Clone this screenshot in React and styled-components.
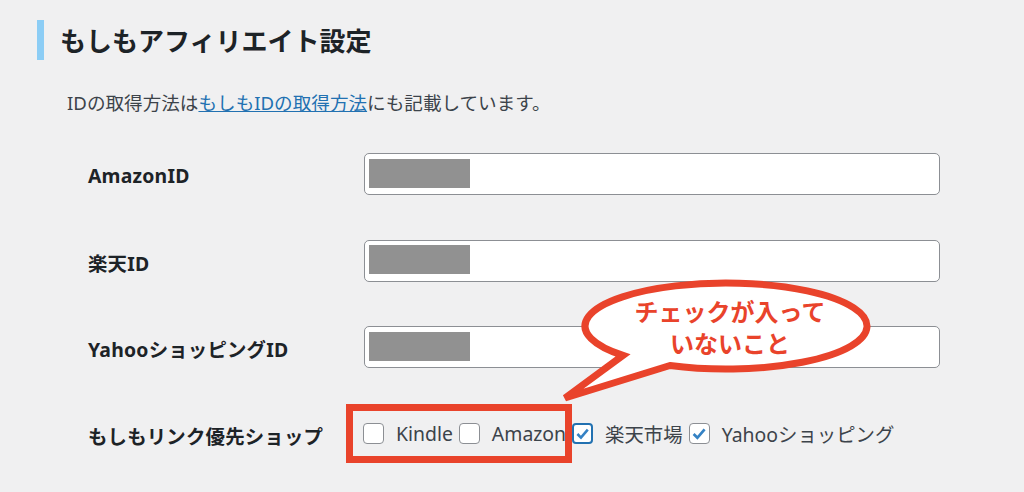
import styled, { createGlobalStyle } from "styled-components";

const GlobalStyle = createGlobalStyle`
	html, body {
		margin: 0;
		padding: 0;
		background: #f0f0f1;
	}
	body {
		font-family: "Noto Sans", "Noto Sans CJK JP", sans-serif;
		color: #1d2327;
	}
`;

const rows = [
	{ label: "AmazonID" },
	{ label: "楽天ID" },
	{ label: "YahooショッピングID" },
];

const shops = [
	{ name: "Kindle", checked: false },
	{ name: "Amazon", checked: false },
	{ name: "楽天市場", checked: true, focused: true },
	{ name: "Yahooショッピング", checked: true },
];

const Check = ({ checked, focused }) => (
	<Box $focused={focused}>
		{checked && (
			<svg width="18" height="18" viewBox="0 0 20 20">
				<path
					d="M4 10 L8.2 14.2 L16.2 4.8"
					fill="none"
					stroke="#3582c4"
					strokeWidth="3"
				/>
			</svg>
		)}
	</Box>
);

const App = () => {
	return (
		<Page>
			<GlobalStyle />
			<Title>もしもアフィリエイト設定</Title>
			<Desc>
				IDの取得方法は<a href="#">もしもIDの取得方法</a>にも記載しています。
			</Desc>
			<Form>
				{rows.map((r) => (
					<Row key={r.label}>
						<Label>{r.label}</Label>
						<InputBox>
							<Mask />
						</InputBox>
					</Row>
				))}
				<Row>
					<Label>もしもリンク優先ショップ</Label>
					<Checks>
						{shops.map((s) => (
							<Item key={s.name}>
								<Check checked={s.checked} focused={s.focused} />
								{s.name}
							</Item>
						))}
					</Checks>
				</Row>
			</Form>
			<Highlight />
			<Bubble>
				<svg width="320" height="135" viewBox="0 0 320 135">
					<path
						d="M110 95.5 A141 43 0 1 0 63 85.4 L5 128 Z"
						fill="#fff"
						stroke="#e9432b"
						strokeWidth="7"
						strokeLinejoin="miter"
					/>
				</svg>
				<BubbleText>
					チェックが入って
					<br />
					いないこと
				</BubbleText>
			</Bubble>
		</Page>
	);
};

export default App;

const Page = styled.div`
	position: relative;
	width: 1024px;
	height: 492px;
	overflow: hidden;
	box-sizing: border-box;
	padding: 20px 0 0 37px;
`;

const Title = styled.h2`
	margin: 0;
	height: 40px;
	line-height: 40px;
	border-left: 7px solid #8ccdf5;
	padding-left: 16px;
	font-family: "Noto Sans CJK JP", sans-serif;
	font-size: 26px;
	font-weight: 700;
	color: #1d2327;
`;

const Desc = styled.p`
	margin: 30px 0 0;
	padding-left: 30px;
	line-height: 26px;
	font-size: 18.6px;
	color: #3c434a;
	a {
		color: #2271b1;
		text-decoration: underline;
	}
`;

const Form = styled.div`
	margin-top: 14.75px;
	padding-left: 51px;
`;

const Row = styled.div`
	display: grid;
	grid-template-columns: 276px 576px;
	align-items: center;
	height: 86.5px;
`;

const Label = styled.div`
	font-size: 19.4px;
	font-weight: 700;
	color: #1d2327;
	padding-top: 3px;
	letter-spacing: 0.2px;
`;

const InputBox = styled.div`
	box-sizing: border-box;
	height: 42px;
	background: #fff;
	border: 1.4px solid #8c8f94;
	border-radius: 5px;
	padding: 4.5px 3.5px;
`;

const Mask = styled.div`
	width: 101px;
	height: 29px;
	background: #919191;
`;

const Checks = styled.div`
	display: flex;
	align-items: center;
	margin-left: -1px;
	font-size: 19.4px;
	color: #3c434a;
	white-space: nowrap;
`;

const Item = styled.label`
	display: flex;
	align-items: center;
	margin-right: 6px;
`;

const Box = styled.span`
	box-sizing: border-box;
	width: 21px;
	height: 21px;
	margin-right: 12px;
	display: flex;
	align-items: center;
	justify-content: center;
	background: #fff;
	border-radius: 4px;
	border: ${(p) => (p.$focused ? "2px solid #2271b1" : "1.4px solid #8c8f94")};
`;

const Highlight = styled.div`
	position: absolute;
	left: 346px;
	top: 404px;
	width: 226px;
	height: 59px;
	box-sizing: border-box;
	border: 7px solid #e9432b;
`;

const Bubble = styled.div`
	position: absolute;
	left: 560px;
	top: 270px;
	width: 320px;
	height: 135px;
	svg {
		display: block;
	}
`;

const BubbleText = styled.div`
	position: absolute;
	left: 20px;
	top: 25px;
	width: 300px;
	text-align: center;
	font-family: "Noto Sans CJK JP", sans-serif;
	font-size: 24px;
	line-height: 32px;
	font-weight: 700;
	color: #e9432b;
`;
